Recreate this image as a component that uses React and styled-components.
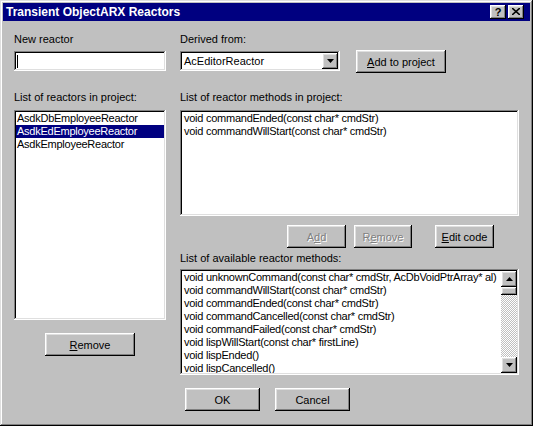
import React from 'react';
import styled, { createGlobalStyle, css } from 'styled-components';

const GlobalStyle = createGlobalStyle`
  html, body {
    margin: 0;
    padding: 0;
    background: #c0c0c0;
  }
  body {
    font-family: "Liberation Sans", Arial, sans-serif;
    font-size: 11px;
    color: #000;
  }
`;

const raised = css`
  box-shadow: inset -1px -1px #000, inset 1px 1px #fff,
    inset -2px -2px #808080, inset 2px 2px #dfdfdf;
`;

const sunken = css`
  box-shadow: inset -1px -1px #fff, inset 1px 1px #808080,
    inset -2px -2px #dfdfdf, inset 2px 2px #000;
`;

const Window = styled.div`
  width: 533px;
  height: 426px;
  box-sizing: border-box;
  padding: 3px;
  background: #c0c0c0;
  box-shadow: inset -1px -1px #000, inset 1px 1px #dfdfdf,
    inset -2px -2px #808080, inset 2px 2px #fff;
`;

const TitleBar = styled.div`
  height: 18px;
  background: #000080;
  color: #fff;
  font-weight: bold;
  font-size: 12px;
  display: flex;
  align-items: center;
  padding: 0 6px 0 3px;
`;

const TitleText = styled.span`
  flex: 1;
`;

const TitleButton = styled.div`
  width: 16px;
  height: 14px;
  margin-left: 2px;
  background: #c0c0c0;
  ${raised};
  color: #000;
  display: flex;
  align-items: center;
  justify-content: center;
  font-weight: bold;
  font-size: 11px;
  box-sizing: border-box;
  padding-bottom: 1px;
`;

const Body = styled.div`
  display: flex;
  padding: 12px 0 0 11px;
`;

const Column = styled.div`
  display: flex;
  flex-direction: column;
  width: ${(p) => p.$w}px;
  margin-left: ${(p) => p.$ml || 0}px;
`;

const Label = styled.div`
  line-height: 13px;
  margin-top: ${(p) => p.$mt || 0}px;
  white-space: nowrap;
`;

const TextField = styled.div`
  width: 152px;
  height: 20px;
  margin-top: ${(p) => p.$mt || 0}px;
  background: #fff;
  ${sunken};
  display: flex;
  align-items: center;
  box-sizing: border-box;
`;

const Caret = styled.span`
  width: 1px;
  height: 13px;
  margin-left: 3px;
  background: #000;
`;

const Row = styled.div`
  display: flex;
  align-items: ${(p) => p.$align || 'flex-start'};
  margin-top: ${(p) => p.$mt || 0}px;
  padding-left: ${(p) => p.$pl || 0}px;
`;

const Combo = styled.div`
  width: 160px;
  height: 20px;
  margin-top: 1px;
  background: #fff;
  ${sunken};
  box-sizing: border-box;
  padding: 2px;
  display: flex;
  align-items: center;
`;

const ComboText = styled.span`
  flex: 1;
  padding-left: 2px;
`;

const SmallButton = styled.div`
  width: 16px;
  height: 16px;
  flex-shrink: 0;
  background: #c0c0c0;
  ${raised};
  display: flex;
  align-items: center;
  justify-content: center;
`;

const Button = styled.div`
  width: ${(p) => p.$w}px;
  height: 23px;
  margin-left: ${(p) => p.$ml || 0}px;
  margin-top: ${(p) => p.$mt || 0}px;
  align-self: ${(p) => p.$self || 'auto'};
  flex-shrink: 0;
  background: #c0c0c0;
  ${raised};
  box-sizing: border-box;
  display: flex;
  align-items: center;
  justify-content: center;
  color: ${(p) => (p.$disabled ? '#808080' : '#000')};
  text-shadow: ${(p) => (p.$disabled ? '1px 1px #fff' : 'none')};
  white-space: nowrap;
`;

const ListBox = styled.div`
  width: ${(p) => p.$w}px;
  height: ${(p) => p.$h}px;
  margin-top: ${(p) => p.$mt || 0}px;
  background: #fff;
  ${sunken};
  box-sizing: border-box;
  padding: 2px;
  display: flex;
  overflow: hidden;
`;

const Items = styled.div`
  flex: 1;
  min-width: 0;
  overflow: hidden;
  letter-spacing: -0.25px;
`;

const Item = styled.div`
  line-height: 13px;
  height: 13px;
  padding-left: ${(p) => p.$pl ?? 2}px;
  white-space: nowrap;
  background: ${(p) => (p.$selected ? '#000080' : 'transparent')};
  color: ${(p) => (p.$selected ? '#fff' : '#000')};
`;

const ScrollBar = styled.div`
  width: 16px;
  flex-shrink: 0;
  display: flex;
  flex-direction: column;
`;

const Thumb = styled.div`
  height: 8px;
  background: #c0c0c0;
  ${raised};
`;

const Track = styled.div`
  flex: 1;
  background: repeating-conic-gradient(#c0c0c0 0 25%, #fff 0 50%) 0 0 / 2px 2px;
`;

const Arrow = ({ up }) => (
  <svg width="7" height="4" viewBox="0 0 7 4">
    <polygon points={up ? '3.5,0 7,4 0,4' : '0,0 7,0 3.5,4'} fill="#000" />
  </svg>
);

const CloseGlyph = () => (
  <svg width="8" height="7" viewBox="0 0 8 7">
    <path d="M0 0 L8 7 M8 0 L0 7" stroke="#000" strokeWidth="1.6" />
  </svg>
);

const reactors = ['AsdkDbEmployeeReactor', 'AsdkEdEmployeeReactor', 'AsdkEmployeeReactor'];

const projectMethods = [
  'void commandEnded(const char* cmdStr)',
  'void commandWillStart(const char* cmdStr)',
];

const availableMethods = [
  'void unknownCommand(const char* cmdStr, AcDbVoidPtrArray* al)',
  'void commandWillStart(const char* cmdStr)',
  'void commandEnded(const char* cmdStr)',
  'void commandCancelled(const char* cmdStr)',
  'void commandFailed(const char* cmdStr)',
  'void lispWillStart(const char* firstLine)',
  'void lispEnded()',
  'void lispCancelled()',
];

function App() {
  return (
    <>
      <GlobalStyle />
      <Window>
        <TitleBar>
          <TitleText>Transient ObjectARX Reactors</TitleText>
          <TitleButton>?</TitleButton>
          <TitleButton>
            <CloseGlyph />
          </TitleButton>
        </TitleBar>
        <Body>
          <Column $w={152}>
            <Label>New reactor</Label>
            <TextField $mt={5}>
              <Caret />
            </TextField>
            <Label $mt={20}>List of reactors in project:</Label>
            <ListBox $w={152} $h={210} $mt={6}>
              <Items>
                {reactors.map((r, i) => (
                  <Item key={r} $selected={i === 1} $pl={1}>
                    {r}
                  </Item>
                ))}
              </Items>
            </ListBox>
            <Button $w={90} $mt={13} $self="center">
              <span>
                <u>R</u>emove
              </span>
            </Button>
          </Column>
          <Column $w={339} $ml={14}>
            <Label>Derived from:</Label>
            <Row $mt={4}>
              <Combo>
                <ComboText>AcEditorReactor</ComboText>
                <SmallButton>
                  <Arrow />
                </SmallButton>
              </Combo>
              <Button $w={90} $ml={16}>
                <span>
                  <u>A</u>dd to project
                </span>
              </Button>
            </Row>
            <Label $mt={18}>List of reactor methods in project:</Label>
            <ListBox $w={339} $h={106} $mt={6}>
              <Items>
                {projectMethods.map((m) => (
                  <Item key={m}>{m}</Item>
                ))}
              </Items>
            </ListBox>
            <Row $mt={9} $pl={107}>
              <Button $w={59} $disabled>
                <span>
                  A<u>d</u>d
                </span>
              </Button>
              <Button $w={58} $ml={8} $disabled>
                <span>
                  R<u>e</u>move
                </span>
              </Button>
              <Button $w={59} $ml={23}>
                <span>
                  <u>E</u>dit code
                </span>
              </Button>
            </Row>
            <Label $mt={4}>List of available reactor methods:</Label>
            <ListBox $w={339} $h={106} $mt={4}>
              <Items>
                {availableMethods.map((m) => (
                  <Item key={m}>{m}</Item>
                ))}
              </Items>
              <ScrollBar>
                <SmallButton>
                  <Arrow up />
                </SmallButton>
                <Thumb />
                <Track />
                <SmallButton>
                  <Arrow />
                </SmallButton>
              </ScrollBar>
            </ListBox>
            <Row $mt={13} $pl={5}>
              <Button $w={75}>OK</Button>
              <Button $w={75} $ml={15}>Cancel</Button>
            </Row>
          </Column>
        </Body>
      </Window>
    </>
  );
}

export default App;
